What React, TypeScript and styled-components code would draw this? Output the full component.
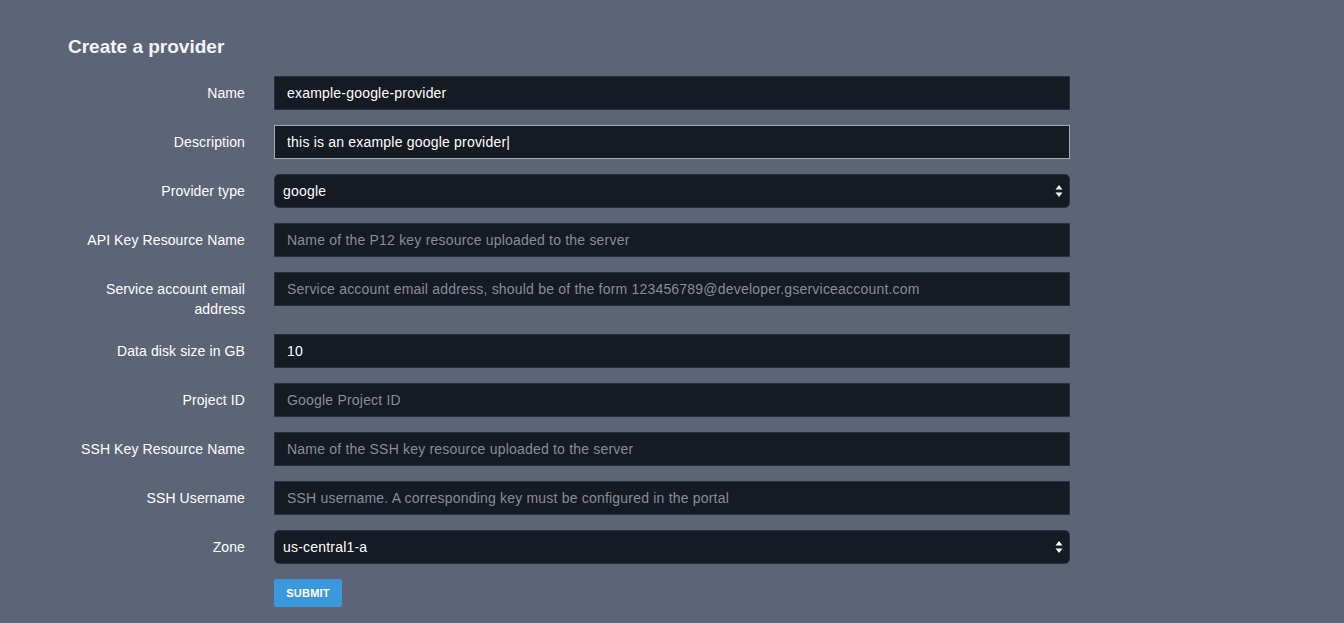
import React from "react";
import styled, { createGlobalStyle } from "styled-components";

const Global = createGlobalStyle`
  html, body { margin: 0; padding: 0; background: #5d6478; }
  body { font-family: "Liberation Sans", Arial, Helvetica, sans-serif; color: #fff; }
  #root { min-height: 100vh; }
`;

const Page = styled.div`
  padding: 35px 0 0 68px;
`;

const Title = styled.h2`
  margin: 0 0 17px;
  font-size: 19px;
  line-height: 24px;
  font-weight: 700;
  color: #f4f5f7;
`;

const Form = styled.form`
  display: grid;
  grid-template-columns: 177px 796px;
  column-gap: 29px;
  row-gap: 15px;
  align-items: start;
`;

const Label = styled.label`
  padding-top: 7px;
  font-size: 14px;
  line-height: 20px;
  letter-spacing: 0.1px;
  text-align: right;
  color: #ffffff;
`;

const TextInput = styled.input<{ $focused?: boolean }>`
  box-sizing: border-box;
  height: 34px;
  width: 100%;
  margin: 0;
  padding: 0 12px;
  border: 1px solid ${(p) => (p.$focused ? "#a7abb4" : "#2a303d")};
  border-radius: 0;
  background: #151a23;
  color: #ffffff;
  font-family: "Liberation Sans", Arial, Helvetica, sans-serif;
  font-size: 14px;
  letter-spacing: 0.2px;
  outline: none;
  &::placeholder { color: #8a8d94; opacity: 1; }
`;

const SelectWrap = styled.div`
  position: relative;
  height: 34px;
`;

const Select = styled.select`
  box-sizing: border-box;
  appearance: none;
  -webkit-appearance: none;
  width: 100%;
  height: 34px;
  margin: 0;
  padding: 0 28px 0 8px;
  border: 1px solid #2a303d;
  border-radius: 5px;
  background: #151a23;
  color: #ffffff;
  font-family: "Liberation Sans", Arial, Helvetica, sans-serif;
  font-size: 14px;
  letter-spacing: 0.2px;
  outline: none;
`;

const Arrows = styled.svg`
  position: absolute;
  right: 7px;
  top: 10px;
  pointer-events: none;
`;

const Submit = styled.button`
  grid-column: 2;
  justify-self: start;
  width: 68px;
  height: 28px;
  border: none;
  border-radius: 2px;
  background: #3b98dc;
  color: #fff;
  font-family: "Liberation Sans", Arial, Helvetica, sans-serif;
  font-size: 11px;
  font-weight: 700;
  letter-spacing: 0.2px;
  text-transform: uppercase;
  padding: 0;
  cursor: pointer;
`;

const SelectField = ({ value }: { value: string }) => (
  <SelectWrap>
    <Select defaultValue={value}>
      <option value={value}>{value}</option>
    </Select>
    <Arrows width="8" height="14" viewBox="0 0 8 14">
      <path d="M4 1 L7.5 5.5 L0.5 5.5 Z" fill="#ffffff" />
      <path d="M4 13 L7.5 8.5 L0.5 8.5 Z" fill="#ffffff" />
    </Arrows>
  </SelectWrap>
);

export default function App() {
  return (
    <Page>
      <Global />
      <Title>Create a provider</Title>
      <Form onSubmit={(e) => e.preventDefault()}>
        <Label>Name</Label>
        <TextInput defaultValue="example-google-provider" />

        <Label>Description</Label>
        <TextInput $focused defaultValue="this is an example google provider|" />

        <Label>Provider type</Label>
        <SelectField value="google" />

        <Label>API Key Resource Name</Label>
        <TextInput placeholder="Name of the P12 key resource uploaded to the server" />

        <Label>
          Service account email
          <br />
          address
        </Label>
        <TextInput placeholder="Service account email address, should be of the form 123456789@developer.gserviceaccount.com" />

        <Label>Data disk size in GB</Label>
        <TextInput defaultValue="10" />

        <Label>Project ID</Label>
        <TextInput placeholder="Google Project ID" />

        <Label>SSH Key Resource Name</Label>
        <TextInput placeholder="Name of the SSH key resource uploaded to the server" />

        <Label>SSH Username</Label>
        <TextInput placeholder="SSH username. A corresponding key must be configured in the portal" />

        <Label>Zone</Label>
        <SelectField value="us-central1-a" />

        <Submit type="submit">Submit</Submit>
      </Form>
    </Page>
  );
}
